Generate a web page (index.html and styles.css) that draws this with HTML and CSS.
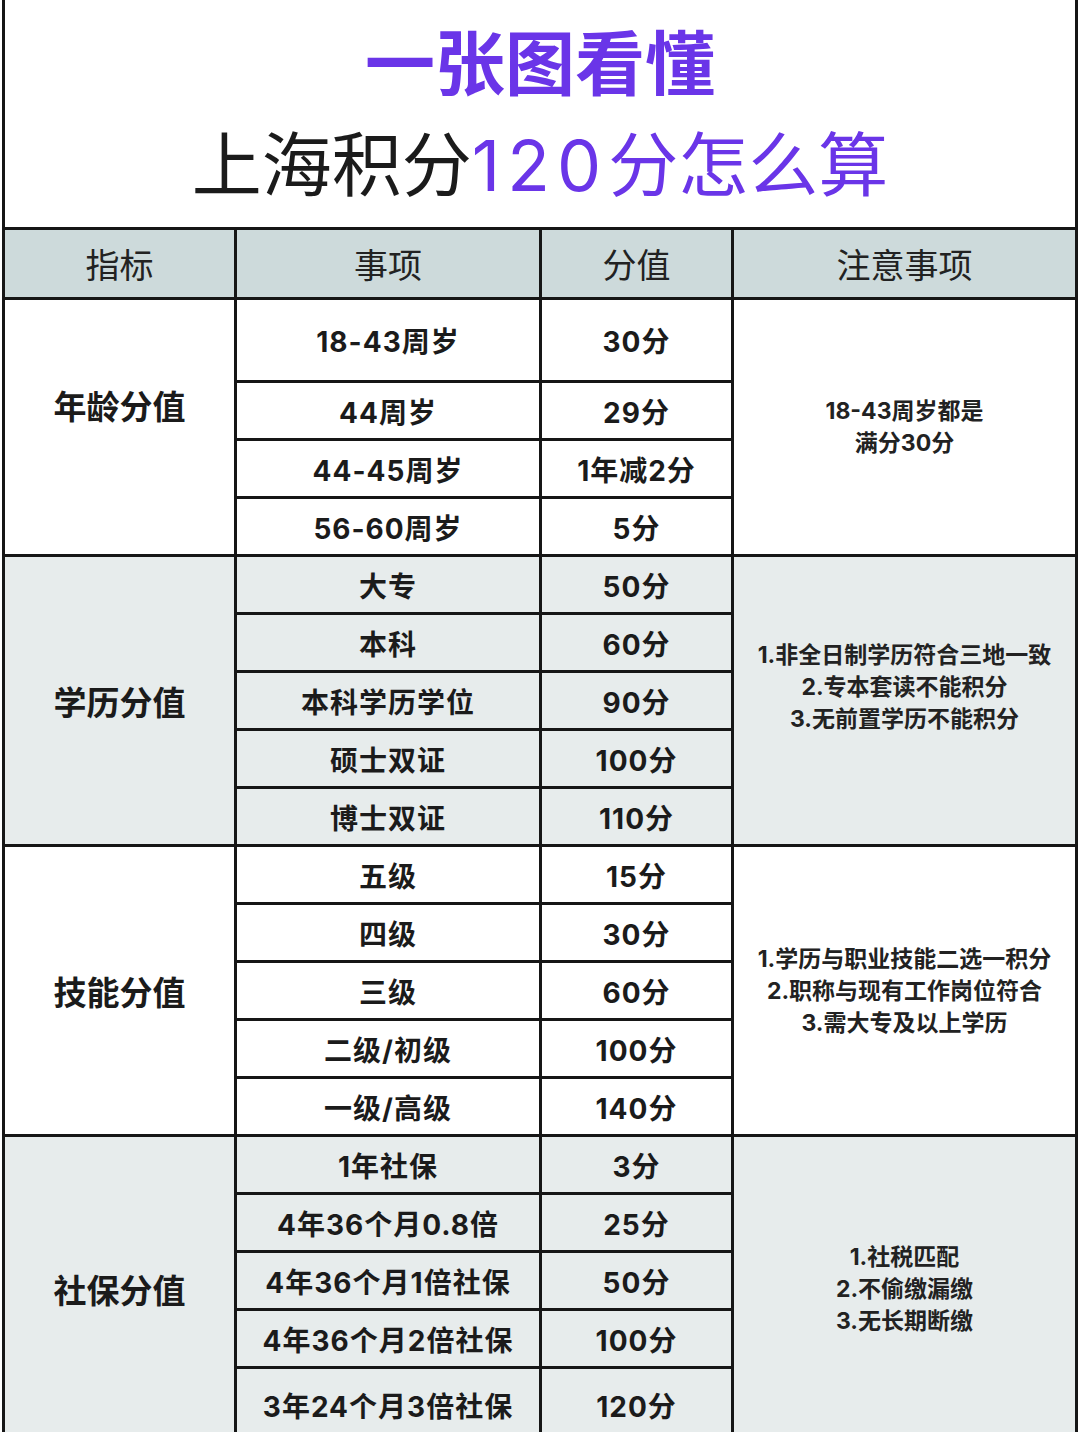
FILE: index.html
```html
<!DOCTYPE html>
<html lang="zh-CN">
<head>
<meta charset="utf-8">
<title>一张图看懂 上海积分120分怎么算</title>
<link rel="stylesheet" href="styles.css">
</head>
<body>
<div class="sheet">
  <header class="title">
    <div class="title-main">一张图看懂</div>
    <div class="title-sub">上海积分<span class="accent"><span class="num">120</span>分怎么算</span></div>
  </header>
  <div class="table">
    <div class="cell head c1">指标</div>
    <div class="cell head c2">事项</div>
    <div class="cell head c3">分值</div>
    <div class="cell head c4">注意事项</div>

    <div class="cell label c1 span4 label-age">年龄分值</div>
    <div class="cell item c2">18-43周岁</div>
    <div class="cell item c3">30分</div>
    <div class="cell note c4 span4">18-43周岁都是<br>满分30分</div>
    <div class="cell item c2">44周岁</div>
    <div class="cell item c3">29分</div>
    <div class="cell item c2">44-45周岁</div>
    <div class="cell item c3">1年减2分</div>
    <div class="cell item c2">56-60周岁</div>
    <div class="cell item c3">5分</div>

    <div class="cell label c1 span5 alt">学历分值</div>
    <div class="cell item c2 alt">大专</div>
    <div class="cell item c3 alt">50分</div>
    <div class="cell note c4 span5 alt note-edu">1.非全日制学历符合三地一致<br>2.专本套读不能积分<br>3.无前置学历不能积分</div>
    <div class="cell item c2 alt">本科</div>
    <div class="cell item c3 alt">60分</div>
    <div class="cell item c2 alt">本科学历学位</div>
    <div class="cell item c3 alt">90分</div>
    <div class="cell item c2 alt">硕士双证</div>
    <div class="cell item c3 alt">100分</div>
    <div class="cell item c2 alt">博士双证</div>
    <div class="cell item c3 alt">110分</div>

    <div class="cell label c1 span5">技能分值</div>
    <div class="cell item c2">五级</div>
    <div class="cell item c3">15分</div>
    <div class="cell note c4 span5">1.学历与职业技能二选一积分<br>2.职称与现有工作岗位符合<br>3.需大专及以上学历</div>
    <div class="cell item c2">四级</div>
    <div class="cell item c3">30分</div>
    <div class="cell item c2">三级</div>
    <div class="cell item c3">60分</div>
    <div class="cell item c2">二级/初级</div>
    <div class="cell item c3">100分</div>
    <div class="cell item c2">一级/高级</div>
    <div class="cell item c3">140分</div>

    <div class="cell label c1 span5 alt">社保分值</div>
    <div class="cell item c2 alt">1年社保</div>
    <div class="cell item c3 alt">3分</div>
    <div class="cell note c4 span5 alt">1.社税匹配<br>2.不偷缴漏缴<br>3.无长期断缴</div>
    <div class="cell item c2 alt">4年36个月0.8倍</div>
    <div class="cell item c3 alt">25分</div>
    <div class="cell item c2 alt">4年36个月1倍社保</div>
    <div class="cell item c3 alt">50分</div>
    <div class="cell item c2 alt">4年36个月2倍社保</div>
    <div class="cell item c3 alt">100分</div>
    <div class="cell item c2 alt">3年24个月3倍社保</div>
    <div class="cell item c3 alt">120分</div>
  </div>
</div>
</body>
</html>
```

FILE: styles.css
```css
html, body {
  margin: 0;
  padding: 0;
  background: #ffffff;
}

body {
  font-family: Inter, "Noto Sans CJK SC", "Noto Sans", sans-serif;
  color: #1b1b1b;
}

.sheet {
  margin-left: 2px;
  width: 1076px;
  box-sizing: border-box;
  border-left: 3px solid #161616;
  border-right: 3px solid #161616;
  background: #ffffff;
}

.title {
  height: 227px;
  box-sizing: border-box;
  padding-top: 15px;
  text-align: center;
}

.title-main {
  font-size: 70px;
  line-height: 100px;
  font-weight: 700;
  color: #6a35e8;
}

.title-sub {
  font-size: 70px;
  line-height: 102px;
  font-weight: 400;
  color: #1b1b1b;
}

.accent {
  color: #6a35e8;
}

.num {
  font-weight: 400;
  letter-spacing: 7px;
}

.table {
  display: grid;
  grid-template-columns: 229px 302px 189px 341px;
  grid-template-rows: 67px 80px repeat(17, 55px) 72px;
  gap: 3px;
  padding-top: 3px;
  background: #161616;
}

.cell {
  display: flex;
  align-items: center;
  justify-content: center;
  text-align: center;
  background: #ffffff;
  box-sizing: border-box;
}

.c1 { grid-column: 1; }
.c2 { grid-column: 2; }
.c3 { grid-column: 3; }
.c4 { grid-column: 4; }

.span4 { grid-row: span 4; }
.span5 { grid-row: span 5; }

.head {
  background: #cddadb;
  font-size: 34px;
  font-weight: 400;
  color: #222222;
}

.alt {
  background: #e7ecec;
}

.label {
  font-size: 33px;
  font-weight: 700;
}

.label-age {
  padding-bottom: 44px;
}

.item {
  font-size: 28px;
  font-weight: 700;
  letter-spacing: 1px;
}

.note {
  font-size: 23px;
  font-weight: 700;
  line-height: 32px;
  color: #222222;
}

.note-edu {
  padding-bottom: 28px;
}
```
